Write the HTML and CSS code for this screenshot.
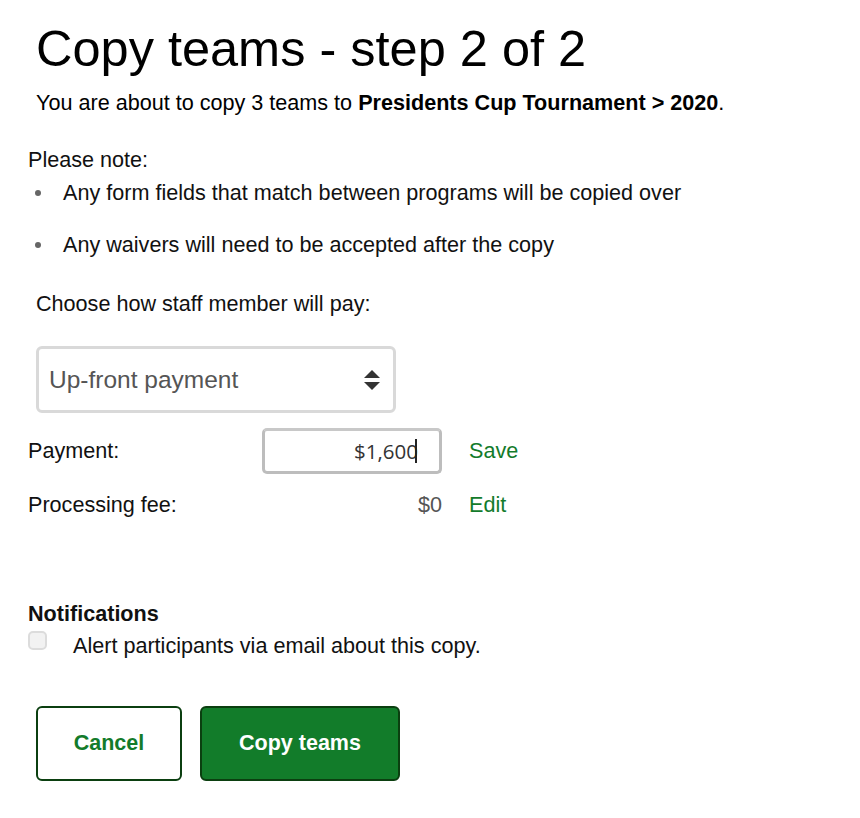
FILE: index.html
```html
<!DOCTYPE html>
<html lang="en">
<head>
    <meta charset="UTF-8">
    <title>Copy teams</title>
    <link rel="stylesheet" href="styles.css">
</head>
<body>
    <div class="modal">
        <div class="intro">
            <h1>Copy teams - step 2 of 2</h1>
            <p>You are about to copy 3 teams to <strong>Presidents Cup Tournament &gt; 2020</strong>.</p>
        </div>

        <div class="note">
            <p>Please note:</p>
            <ul>
                <li>Any form fields that match between programs will be copied over</li>
                <li>Any waivers will need to be accepted after the copy</li>
            </ul>
        </div>

        <div class="pay-method">
            <p>Choose how staff member will pay:</p>
            <div class="select">
                <span>Up-front payment</span>
                <svg width="18" height="24" viewBox="0 0 18 24">
                    <path d="M9 2 L17 10 H1 Z" fill="#333"></path>
                    <path d="M9 22 L17 14 H1 Z" fill="#333"></path>
                </svg>
            </div>
        </div>

        <div class="fees">
            <span class="label">Payment:</span>
            <div class="amount-input">$1,600<span class="caret"></span></div>
            <a class="link" href="#">Save</a>

            <span class="label">Processing fee:</span>
            <span class="amount">$0</span>
            <a class="link" href="#">Edit</a>
        </div>

        <div class="notifications">
            <h4>Notifications</h4>
            <label class="check">
                <span class="box"></span>
                Alert participants via email about this copy.
            </label>
        </div>

        <div class="actions">
            <button class="btn btn-outline">Cancel</button>
            <button class="btn btn-primary">Copy teams</button>
        </div>
    </div>
</body>
</html>
```

FILE: styles.css
```css
body {
    margin: 0;
    background: #ffffff;
    font-family: "Liberation Sans", Arial, sans-serif;
    font-size: 21.6px;
    line-height: 24px;
    color: #111;
}

.modal {
    width: 860px;
    height: 818px;
    box-sizing: border-box;
    padding: 22px 0 0 28px;
    border-radius: 0 0 0 14px;
    background: #fff;
}

.intro {
    padding-left: 8px;
}

.intro h1 {
    margin: 0;
    font-size: 50.5px;
    font-weight: normal;
    line-height: 54px;
    color: #000;
}

.intro p {
    margin: 15px 0 0;
    color: #000;
}

.note {
    margin-top: 33px;
}

.note p {
    margin: 0;
}

.note ul {
    margin: 9px 0 0;
    padding: 0 0 0 35px;
    list-style: none;
}

.note li {
    position: relative;
    margin-bottom: 28px;
}

.note li::before {
    content: "";
    position: absolute;
    left: -28px;
    top: 9px;
    width: 6px;
    height: 6px;
    border-radius: 50%;
    background: #666;
}

/* collapses with the last list item's bottom margin */
.pay-method {
    padding-left: 8px;
    margin-top: 35px;
}

.pay-method p {
    margin: 0;
}

.select {
    margin-top: 30px;
    width: 360px;
    height: 67px;
    box-sizing: border-box;
    border: 3px solid #d9d9d9;
    border-radius: 6px;
    display: flex;
    align-items: center;
    justify-content: space-between;
    padding: 0 12px 0 10px;
    font-size: 24.5px;
    color: #555;
}

.fees {
    margin-top: 15px;
    display: grid;
    grid-template-columns: 207px 180px auto;
    column-gap: 27px;
    row-gap: 19px;
    align-items: center;
}

.amount-input {
    height: 46px;
    box-sizing: border-box;
    border: 3px solid #bdbdbd;
    border-top-color: #c8c8c8;
    border-radius: 5px;
    display: flex;
    align-items: center;
    justify-content: flex-end;
    padding-right: 22px;
    font-family: "Open Sans", "DejaVu Sans", sans-serif;
    font-size: 20.5px;
    color: #333;
}

.caret {
    width: 2px;
    height: 24px;
    margin-left: -3px;
    background: #222;
}

.amount {
    text-align: right;
    color: #555;
}

.link {
    color: #137b2b;
    text-decoration: none;
}

.notifications {
    margin-top: 85px;
}

.notifications h4 {
    margin: 0;
    font-size: 21.6px;
}

.check {
    display: flex;
    align-items: center;
    gap: 26px;
    margin-top: 8px;
}

.box {
    width: 19px;
    height: 19px;
    box-sizing: border-box;
    border: 2px solid #dcdcdc;
    border-radius: 5px;
    background: #f2f2f2;
    margin-top: -11px;
}

.actions {
    margin-top: 48px;
    padding-left: 8px;
    display: flex;
    gap: 18px;
}

.btn {
    height: 75px;
    border-radius: 6px;
    border: 2px solid #0b3f10;
    font-family: "Liberation Sans", Arial, sans-serif;
    font-size: 21.5px;
    font-weight: bold;
    cursor: pointer;
}

.btn-outline {
    width: 146px;
    background: #fff;
    color: #137b2b;
}

.btn-primary {
    width: 200px;
    background: #127c2a;
    color: #fff;
}
```
